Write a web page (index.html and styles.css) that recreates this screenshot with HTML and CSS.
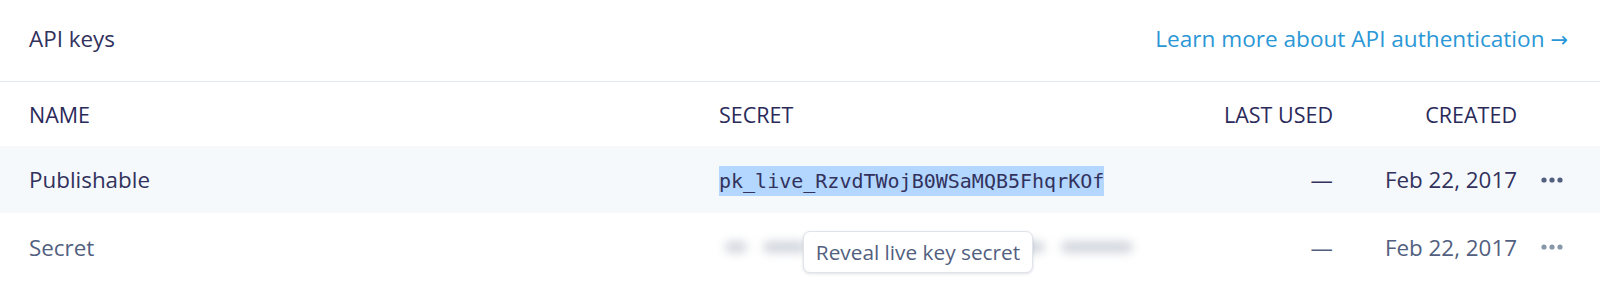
FILE: index.html
```html
<!DOCTYPE html>
<html>
<head>
<meta charset="utf-8">
<link rel="stylesheet" href="styles.css">
</head>
<body>
<section class="panel">
  <header class="panel-head">
    <h2 class="title">API keys</h2>
    <a class="learn" href="#">Learn more about API authentication <span class="arrow">→</span></a>
  </header>
  <div class="table">
    <div class="row head">
      <div class="cell">NAME</div>
      <div class="cell">SECRET</div>
      <div class="cell right">LAST USED</div>
      <div class="cell right">CREATED</div>
      <div class="cell"></div>
    </div>
    <div class="row pub">
      <div class="cell">Publishable</div>
      <div class="cell"><span class="key selected">pk_live_RzvdTWojB0WSaMQB5FhqrKOf</span></div>
      <div class="cell right">—</div>
      <div class="cell right">Feb 22, 2017</div>
      <div class="cell right"><svg class="dots" width="22" height="6" viewBox="0 0 22 6"><circle cx="3" cy="3" r="2.6"/><circle cx="11" cy="3" r="2.6"/><circle cx="19" cy="3" r="2.6"/></svg></div>
    </div>
    <div class="row sec">
      <div class="cell">Secret</div>
      <div class="cell secret-cell">
        <div class="blurred" aria-hidden="true">
          <span class="blob w20"></span>
          <span class="blob w44"></span>
          <span class="blob w60"></span>
          <span class="blob w90"></span>
          <span class="blob w70"></span>
          <span class="blob w80"></span>
        </div>
        <div class="tooltip">Reveal live key secret</div>
      </div>
      <div class="cell right">—</div>
      <div class="cell right">Feb 22, 2017</div>
      <div class="cell right"><svg class="dots" width="22" height="6" viewBox="0 0 22 6"><circle cx="3" cy="3" r="2.6"/><circle cx="11" cy="3" r="2.6"/><circle cx="19" cy="3" r="2.6"/></svg></div>
    </div>
  </div>
</section>
</body>
</html>
```

FILE: styles.css
```css
html, body {
  margin: 0;
  padding: 0;
  background: #ffffff;
}
body {
  width: 1600px;
  height: 282px;
  overflow: hidden;
  font-family: "Open Sans", "Noto Sans", sans-serif;
  font-size: 22px;
  color: #32325d;
}
.panel {
  display: flex;
  flex-direction: column;
}
.panel-head {
  height: 82px;
  display: flex;
  align-items: center;
  justify-content: space-between;
  padding: 0 32px 4px 29px;
  box-sizing: border-box;
  border-bottom: 1px solid #e3e8ee;
}
.title {
  margin: 0;
  font-size: 22.4px;
  font-weight: 400;
  color: #32325d;
}
.learn {
  color: #2b97d6;
  text-decoration: none;
  font-size: 22.6px;
}
.arrow {
  font-family: "DejaVu Sans", sans-serif;
  font-size: 21px;
}
.table {
  display: flex;
  flex-direction: column;
}
.row {
  display: grid;
  grid-template-columns: 690px 414px 200px 184px 46px;
  align-items: center;
  padding: 0 37px 0 29px;
}
.row.head {
  height: 64px;
  font-size: 21.5px;
  color: #2a2a5a;
}
.row.pub {
  height: 67px;
  background: #f6f9fc;
  color: #32325d;
  font-size: 22.4px;
}
.row.sec {
  height: 68px;
  color: #525f7f;
  font-size: 22.4px;
}
.cell {
  white-space: nowrap;
  position: relative;
}
.right {
  text-align: right;
  display: flex;
  justify-content: flex-end;
  align-items: center;
}
.key {
  font-family: "DejaVu Sans Mono", monospace;
  font-size: 20px;
  line-height: 30px;
  display: inline-block;
}
.selected {
  background: #b3d7ff;
  color: #32325d;
}
.blurred {
  display: flex;
  align-items: center;
  gap: 16px;
  height: 30px;
  padding-left: 6px;
  filter: blur(5px);
}
.blob {
  display: block;
  height: 12px;
  border-radius: 6px;
  background: #d3d7de;
}
.w20 { width: 22px; }
.w44 { width: 44px; }
.w60 { width: 60px; }
.w90 { width: 90px; }
.w70 { width: 40px; }
.w80 { width: 72px; }
.tooltip {
  position: absolute;
  left: 84px;
  top: -1px;
  width: 230px;
  height: 42px;
  box-sizing: border-box;
  background: #fff;
  border: 1px solid #dfe3ea;
  border-radius: 7px;
  box-shadow: 0 1px 3px rgba(50, 50, 93, 0.15);
  display: flex;
  align-items: center;
  justify-content: center;
  font-size: 20.8px;
  color: #525f7f;
}
.dots {
  display: block;
}
.pub .dots { fill: #525f7f; }
.sec .dots { fill: #8898aa; }
```
